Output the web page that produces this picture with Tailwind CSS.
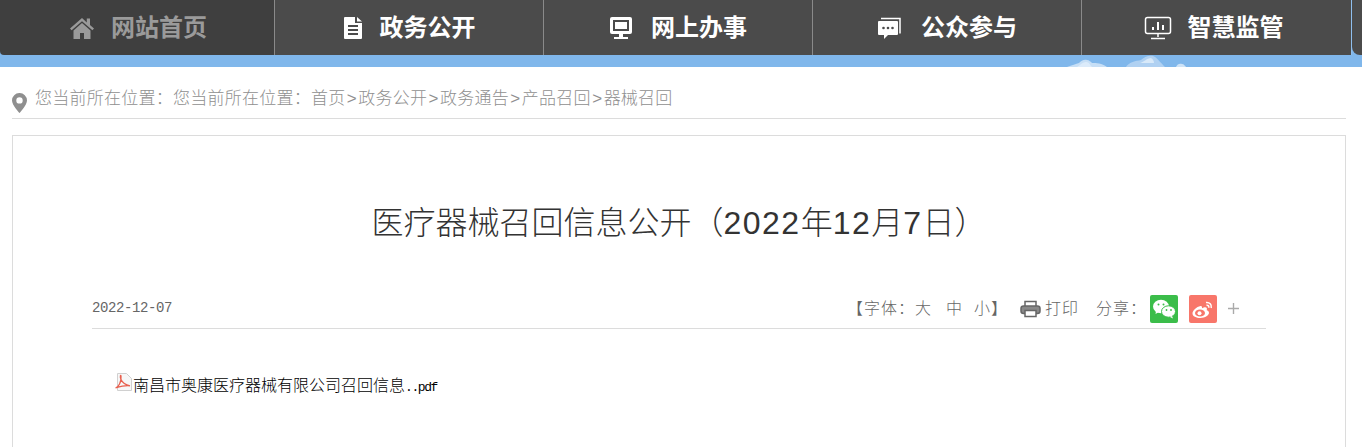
<!DOCTYPE html>
<html lang="zh-CN">

<head>
  <meta charset="UTF-8">
  <title>医疗器械召回信息公开</title>
  <script src="https://cdn.jsdelivr.net/npm/@tailwindcss/browser@4"></script>
</head>

<body class="bg-white font-['Liberation_Sans','Noto_Sans_CJK_SC',sans-serif] overflow-hidden">
  <!-- top nav -->
  <nav class="flex h-[55px] bg-[#80b7eb] text-white text-[24px] font-bold">
    <a class="w-[275px] flex items-center justify-center gap-[16px] bg-[#3f3f3f] border-r border-[#8a8a8a] rounded-bl-[4px] text-[#9a9a9a] pl-[2px]">
      <svg class="w-[26px] h-[24px]" viewBox="0 0 26 24" fill="#9a9a9a"><path d="M13 2 1 12.5l1.6 1.8L13 5.2l10.4 9.1 1.6-1.8-4-3.5V2.5h-3.2v4z"/><path d="M13 7 4.5 14.4V23H11v-6h4v6h6.5v-8.600z"/></svg>
      <span>网站首页</span>
    </a>
    <a class="w-[269px] flex items-center justify-center gap-[17px] bg-[#4b4b4b] border-r border-[#8a8a8a]">
      <svg class="w-[20px] h-[24px]" viewBox="0 0 20 24"><path fill="#fff" d="M2 1h10v6h7v15a1 1 0 0 1-1 1H2a1 1 0 0 1-1-1V2a1 1 0 0 1 1-1z"/><path fill="#fff" d="M14 1l5 4.500h-5z"/><path stroke="#4b4b4b" stroke-width="2" d="M5 10h10M5 14h10M5 18h10"/></svg>
      <span>政务公开</span>
    </a>
    <a class="w-[269px] flex items-center justify-center gap-[18px] bg-[#4b4b4b] border-r border-[#8a8a8a]">
      <svg class="w-[24px] h-[24px]" viewBox="0 0 24 24"><rect x="1" y="1" width="22" height="17" rx="2" fill="#fff"/><rect x="4" y="4" width="16" height="11" fill="#4b4b4b"/><rect x="6" y="6" width="12" height="7" fill="#fff"/><path fill="#fff" d="M10 18h4v3h-4zM5 21h14v2H5z"/></svg>
      <span>网上办事</span>
    </a>
    <a class="w-[269px] flex items-center justify-center gap-[19px] bg-[#4b4b4b] border-r border-[#8a8a8a]">
      <svg class="w-[25px] h-[24px]" viewBox="0 0 25 24"><path fill="none" stroke="#fff" stroke-width="1.500" d="M4 2.500h19v15"/><path fill="#fff" d="M2 5h18a1 1 0 0 1 1 1v12a1 1 0 0 1-1 1h-9l-4 4v-4H2a1 1 0 0 1-1-1V6a1 1 0 0 1 1-1z"/><circle cx="6.500" cy="12" r="1.300" fill="#4b4b4b"/><circle cx="11" cy="12" r="1.300" fill="#4b4b4b"/><circle cx="15.500" cy="12" r="1.300" fill="#4b4b4b"/></svg>
      <span>公众参与</span>
    </a>
    <a class="w-[270px] flex items-center justify-center gap-[16px] bg-[#4b4b4b] border-r border-[#8fbfee] pr-[6px]">
      <svg class="w-[28px] h-[24px]" viewBox="0 0 28 24" fill="none" stroke="#fff" stroke-width="1.500"><rect x="1.500" y="1.500" width="25" height="16" rx="2"/><path stroke-width="2" d="M9 14v-3M14 14V6M19 14V9"/><path d="M14 18v3M7 22.500h14"/></svg>
      <span>智慧监管</span>
    </a>
    <div class="flex-1 bg-[#4b4b4b] rounded-bl-[8px]"></div>
  </nav>
  <!-- sky strip -->
  <div class="relative h-[12px] overflow-hidden bg-[#80b7eb]">
    <svg class="absolute left-[1060px] top-0 w-[130px] h-[12px] opacity-80 blur-[0.5px]" viewBox="0 0 130 12">
      <path fill="#d9e9f9" d="M7 12c5-2 9-3 12-4 2-2 5-4 8-3 2 0 4 2 5 3 4 0 10 0 15 4z"/>
      <path fill="#f4f9fe" d="M17 12c3-2 6-5 9-5 3 0 4 3 6 5z"/>
      <path fill="#bcd8f4" d="M66 12c3-5 10-6 15-7 3-3 10-6 14-3 3 2 5 5 10 10z"/>
      <path fill="#eef6fd" d="M80 8c4-1 7-5 11-5 2 1 3 3 3 5z"/>
      <path fill="#e2effb" d="M116 12c1-3 4-4 6-3 2 0 3 2 4 3z"/>
    </svg>
  </div>

  <div class="px-[12px] w-[1346px] box-content">
    <!-- breadcrumb -->
    <div class="w-[1334px] h-[52px] flex items-center gap-[8px] border-b border-[#dcdcdc] text-[#8f8f8f] pt-[12px]">
      <svg class="w-[15px] h-[20px] mt-[8px]" viewBox="0 0 15 20"><path fill="#8f8f8f" fill-rule="evenodd" d="M7.500 0A7.400 7.400 0 0 0 0 7.400C0 12 7.500 20 7.500 20S15 12 15 7.400A7.400 7.400 0 0 0 7.500 0zm0 4.200a3.200 3.200 0 1 1 0 6.400 3.200 3.200 0 0 1 0-6.400z"/></svg>
      <span class="text-[17px] tracking-[0.25px] font-light">您当前所在位置：您当前所在位置：首页<span class="px-[1.300px]">&gt;</span>政务公开<span class="px-[1.300px]">&gt;</span>政务通告<span class="px-[1.300px]">&gt;</span>产品召回<span class="px-[1.300px]">&gt;</span>器械召回</span>
    </div>

    <!-- article frame -->
    <div class="w-[1334px] h-[330px] mt-[16px] border border-[#dcdcdc] border-b-0 px-[79px]">
      <h1 class="mt-[63px] text-center text-[32px] leading-[48px] font-light text-[#333]">医疗器械召回信息公开（<span class="tracking-[1.500px]">2022</span>年<span class="tracking-[1.500px]">12</span>月<span class="tracking-[1.500px]">7</span>日）</h1>

      <div class="mt-[36px] h-[46px] flex items-center justify-between border-b border-[#dcdcdc] text-[#666] pt-[6px]">
        <span class="font-['Liberation_Mono',monospace] text-[14px] tracking-[-0.4px] text-[#666]">2022-12-07</span>
        <div class="flex items-center text-[16px] font-light pr-[27px] tracking-[1px]">
          <span>【字体：</span>
          <span>大</span>
          <span class="ml-[14px]">中</span>
          <span class="ml-[11px]">小</span>
          <span>】</span>
          <svg class="ml-[12px] w-[21px] h-[18px]" viewBox="0 0 21 18" fill="none" stroke="#666" stroke-width="1.500"><path d="M5 6V1.500h11V6"/><rect x="1" y="6" width="19" height="7.500" rx="2.500" fill="#888"/><rect x="5" y="10.500" width="11" height="6" fill="#fff"/></svg>
          <span class="ml-[4px]">打印</span>
          <span class="ml-[17px]">分享：</span>
          <span class="ml-[3px] w-[28px] h-[28px] rounded-[2px] bg-[#3bbd4a] flex items-center justify-center">
            <svg class="w-[24px] h-[20px]" viewBox="0 0 24 20" fill="#fff"><ellipse cx="9" cy="7.500" rx="8" ry="6.800"/><path d="M4 12l-.5 3 3-1.800z"/><ellipse cx="16.500" cy="12.500" rx="7" ry="5.700" stroke="#3bbd4a"/><path d="M20 17l1 2.500-3.500-1.800z"/><circle cx="6.500" cy="5.500" r="1" fill="#3bbd4a"/><circle cx="11.500" cy="5.500" r="1" fill="#3bbd4a"/><circle cx="14.500" cy="11" r=".9" fill="#3bbd4a"/><circle cx="19" cy="11" r=".9" fill="#3bbd4a"/></svg>
          </span>
          <span class="ml-[11px] w-[28px] h-[28px] rounded-[2px] bg-[#f8766a] flex items-center justify-center">
            <svg class="w-[24px] h-[20px]" viewBox="0 0 24 20" fill="none"><path fill="#fff" d="M9.500 7c-4 .8-8 4.500-8 7.500 0 2.800 3.800 4.500 7.800 4.500 5 0 8.700-2.700 8.700-5.200 0-1.700-1.500-2.300-2.300-2.600.8-2.200-.3-3.400-3-2.600l-1.700.6c.2-1.500-.2-2.600-1.500-2.200z"/><ellipse cx="9" cy="14" rx="5" ry="3.600" fill="#f8766a"/><circle cx="8.500" cy="14.200" r="2" fill="#fff"/><path stroke="#fff" stroke-width="1.600" d="M15 3.500c3.500-.5 6 2 5.200 5.500M15.500 6.200c1.700-.2 2.600 1 2.200 2.500"/></svg>
          </span>
          <svg class="ml-[11px] w-[11px] h-[11px]" viewBox="0 0 12 12" stroke="#aaa" stroke-width="1.500"><path d="M6 0v12M0 6h12"/></svg>
        </div>
      </div>

      <div class="mt-[45px] pl-[23px] flex items-center text-black">
        <svg class="w-[18px] h-[18px] -mt-[8px]" viewBox="0 0 18 18" fill="none"><path fill="#f7f7f7" stroke="#d0d0d0" d="M2.500 .5h9l5 5v12h-14z"/><path stroke="#e8604f" stroke-width="1.300" d="M.5 15c3-1 6-6 5.500-11.500C6 1 4.500 3 6 6.500c1.500 3.500 5 5.500 9 6.300-4-.5-9 .5-14.500 2.200z"/></svg>
        <span class="text-[16px] font-light">南昌市奥康医疗器械有限公司召回信息</span><span class="font-['Liberation_Mono',monospace] text-[13px] tracking-[-1.400px] pt-[3px]">..pdf</span>
      </div>
    </div>
  </div>
</body>

</html>
